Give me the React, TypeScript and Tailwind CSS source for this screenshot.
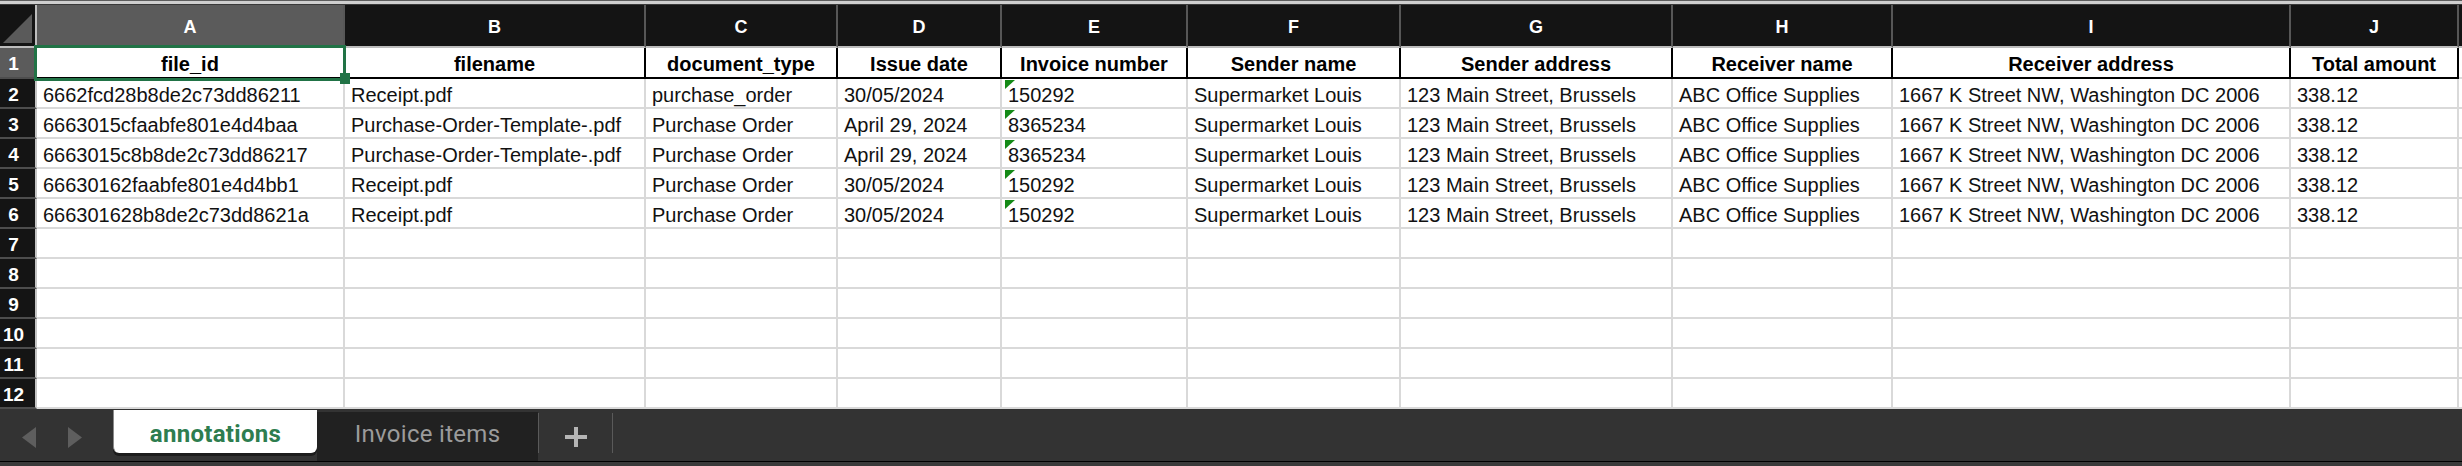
import React from "react";

const cols = ["A", "B", "C", "D", "E", "F", "G", "H", "I", "J"];
const headers = [
  "file_id",
  "filename",
  "document_type",
  "Issue date",
  "Invoice number",
  "Sender name",
  "Sender address",
  "Receiver name",
  "Receiver address",
  "Total amount",
];

const tail = ["Supermarket Louis", "123 Main Street, Brussels", "ABC Office Supplies", "1667 K Street NW, Washington DC 2006", "338.12"];

const rows: string[][] = [
  ["6662fcd28b8de2c73dd86211", "Receipt.pdf", "purchase_order", "30/05/2024", "150292", ...tail],
  ["6663015cfaabfe801e4d4baa", "Purchase-Order-Template-.pdf", "Purchase Order", "April 29, 2024", "8365234", ...tail],
  ["6663015c8b8de2c73dd86217", "Purchase-Order-Template-.pdf", "Purchase Order", "April 29, 2024", "8365234", ...tail],
  ["66630162faabfe801e4d4bb1", "Receipt.pdf", "Purchase Order", "30/05/2024", "150292", ...tail],
  ["666301628b8de2c73dd8621a", "Receipt.pdf", "Purchase Order", "30/05/2024", "150292", ...tail],
];

const empty = Array.from({ length: 6 }, () => Array.from({ length: 10 }, () => ""));
const allRows = [...rows, ...empty];

function Marker() {
  return (
    <svg className="absolute left-[3px] top-[1px]" width="10" height="9" viewBox="0 0 10 9">
      <polygon points="0,0 10,0 0,9" fill="#138a17" />
    </svg>
  );
}

export default function App() {
  return (
    <div className="w-[2462px] h-[466px] bg-white overflow-hidden" style={{ fontFamily: '"Liberation Sans", Arial, sans-serif' }}>
      <div className="relative">
        {/* top strip */}
        <div className="h-[5px] border-t border-b border-t-[#5e5e5e] border-b-[#3a3a3a] bg-[#cfcfcf]" />
        <div className="grid grid-cols-[37px_308px_301px_192px_164px_186px_213px_272px_220px_398px_168px_1fr]">
          {/* column header row */}
          <div className="h-[43px] bg-[#141414] border-r-2 border-b-2 border-[#bdbdbd] relative">
            <svg className="absolute left-[3px] top-[9px]" width="30" height="30" viewBox="0 0 30 30">
              <polygon points="0,29 29,29 29,0" fill="#5a5a5a" />
            </svg>
          </div>
          {cols.map((c, i) => (
            <div
              key={c}
              className={`h-[43px] flex items-center justify-center pt-[3px] text-[18px] font-bold text-white border-r-2 border-b-2 border-r-[#575757] border-b-[#bdbdbd] ${
                i === 0 ? "bg-[#5b5b5b]" : "bg-[#141414]"
              }`}
            >
              {c}
            </div>
          ))}
          <div className="h-[43px] bg-[#141414] border-b-2 border-b-[#bdbdbd]" />

          {/* row 1 */}
          <div className="h-[31px] bg-[#5b5b5b] text-white font-bold text-[19px] leading-[32px] text-center pr-[8px] border-r-2 border-b-2 border-r-[#c4c4c4] border-b-[#4d4d4d]">
            1
          </div>
          {headers.map((h) => (
            <div
              key={h}
              className="h-[31px] text-[20px] font-bold text-black text-center leading-[32px] whitespace-nowrap border-r-2 border-b-2 border-black"
            >
              {h}
            </div>
          ))}
          <div className="h-[31px] border-b-2 border-b-[#d9d9d9]" />

          {/* data rows */}
          {allRows.map((r, ri) => (
            <React.Fragment key={ri}>
              <div className="h-[30px] bg-[#141414] text-white font-bold text-[19px] leading-[32px] text-center pr-[8px] border-r-2 border-b-2 border-r-[#c4c4c4] border-b-[#4d4d4d]">
                {ri + 2}
              </div>
              {r.map((v, ci) => (
                <div
                  key={ci}
                  className="relative h-[30px] pl-[6px] text-[20px] text-[#111] leading-[32px] whitespace-nowrap border-r-2 border-b-2 border-[#d9d9d9]"
                >
                  {ci === 4 && v !== "" ? <Marker /> : null}
                  {v}
                </div>
              ))}
              <div className="h-[30px] border-b-2 border-b-[#d9d9d9]" />
            </React.Fragment>
          ))}
        </div>

        {/* selection overlay */}
        <div className="absolute left-[34px] top-[45px] w-[312px] h-[36px] border-[3px] border-[#217346]" />
        <div className="absolute left-[340px] top-[73px] w-[10px] h-[11px] bg-[#217346]" />
      </div>

      {/* sheet tab bar */}
      <div className="flex flex-col h-[57px] bg-[#333333]">
        <div className="flex h-[52px]">
          <div className="w-[113px] flex items-start pt-[18px] pl-[22px] gap-[32px]">
            <svg width="14" height="21" viewBox="0 0 14 21">
              <polygon points="14,0 14,21 0,10.5" fill="#5e5e5e" />
            </svg>
            <svg width="14" height="21" viewBox="0 0 14 21">
              <polygon points="0,0 0,21 14,10.5" fill="#5e5e5e" />
            </svg>
          </div>
          <div className="w-[204px] mt-[1px] h-[43px] bg-white rounded-b-[6px] border-l border-l-[#8a8a8a] shadow-[0_3px_0_#1c1c1c] flex justify-center items-start pt-[11px]">
            <span
              className="text-[24px] leading-[27px] font-bold text-[#2e7d4f] tracking-[0.3px]"
              style={{ fontFamily: 'Roboto, "Liberation Sans", sans-serif' }}
            >
              annotations
            </span>
          </div>
          <div className="w-[221px] mt-[3px] h-[50px] bg-[#212121] flex justify-center items-start pt-[9px]">
            <span
              className="text-[24px] leading-[27px] text-[#9b9b9b] tracking-[0.3px]"
              style={{ fontFamily: 'Roboto, "Liberation Sans", sans-serif' }}
            >
              Invoice items
            </span>
          </div>
          <div className="w-px mt-[4px] h-[40px] bg-[#5a5a5a]" />
          <div className="w-[73px] flex items-start justify-center pt-[18px]">
            <svg width="22" height="20" viewBox="0 0 22 20">
              <rect x="9" y="0" width="4" height="20" fill="#b5b5b5" />
              <rect x="0" y="8" width="22" height="4" fill="#b5b5b5" />
            </svg>
          </div>
          <div className="w-px mt-[4px] h-[40px] bg-[#5a5a5a]" />
        </div>
        <div className="h-px bg-black" />
        <div className="h-[4px] bg-[#3a3a3a]" />
      </div>
    </div>
  );
}
